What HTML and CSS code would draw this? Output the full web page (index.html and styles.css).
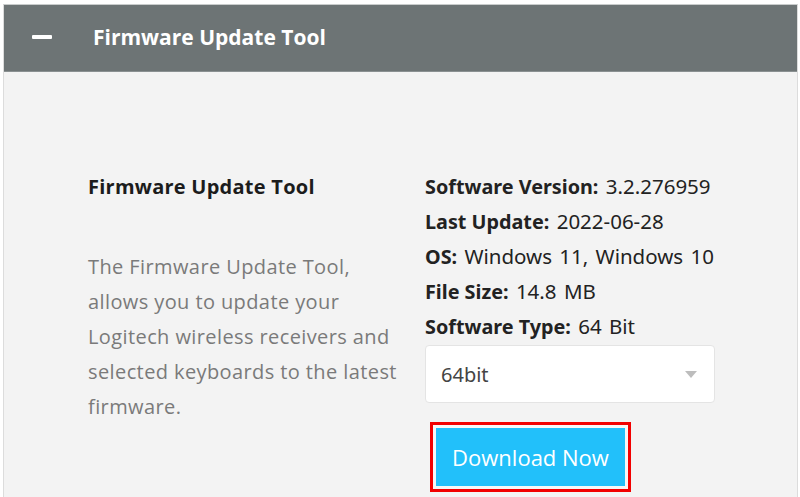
FILE: index.html
```html
<!DOCTYPE html>
<html lang="en">
  <head>
    <meta charset="UTF-8" />
    <meta name="viewport" content="width=device-width, initial-scale=1.0" />
    <title>Firmware Update Tool</title>
    <link rel="stylesheet" href="styles.css">
  </head>
  <body>
    <div class="panel">
      <div class="panel-header">
        <span class="toggle"></span>
        <h2>Firmware Update Tool</h2>
      </div>

      <div class="panel-body">
        <div class="about">
          <h3>Firmware Update Tool</h3>
          <p>
            The Firmware Update Tool, allows you to update your Logitech
            wireless receivers and selected keyboards to the latest firmware.
          </p>
        </div>

        <div class="details">
          <ul class="specs">
            <li><strong>Software Version:</strong> 3.2.276959</li>
            <li><strong>Last Update:</strong> 2022-06-28</li>
            <li><strong>OS:</strong> Windows 11, Windows 10</li>
            <li><strong>File Size:</strong> 14.8 MB</li>
            <li><strong>Software Type:</strong> 64 Bit</li>
          </ul>

          <div class="select">
            <span>64bit</span>
            <span class="caret"></span>
          </div>

          <div class="highlight">
            <a href="#" class="download">Download Now</a>
          </div>
        </div>
      </div>
    </div>
  </body>
</html>
```

FILE: styles.css
```css
* {
  margin: 0;
  padding: 0;
  box-sizing: border-box;
}

body {
  background: #ffffff;
  padding: 4px 2px 0 3px;
  font-family: "Open Sans", sans-serif;
}

.panel {
  border-top: 1px solid #c9cccc;
  border-left: 1px solid #dcdcdc;
  border-right: 1px solid #dcdcdc;
  background: #f3f3f3;
  height: 493px;
}

/* Collapsible header bar */
.panel-header {
  display: flex;
  align-items: center;
  height: 67px;
  background: #6d7475;
  border-bottom: 1px solid #8a9091;
  color: #ffffff;
}

.toggle {
  width: 20px;
  height: 4px;
  background: #ffffff;
  border-radius: 1px;
  margin-left: 28px;
  margin-bottom: 3px;
}

.panel-header h2 {
  font-size: 21px;
  font-weight: 700;
  margin-left: 41px;
  margin-bottom: 2px;
}

.panel-body {
  display: flex;
  padding: 97px 0 0 84px;
}

.about {
  width: 337px;
}

.about h3 {
  font-size: 20px;
  font-weight: 700;
  letter-spacing: 0.25px;
  color: #1c1c1c;
  line-height: 35px;
  margin-bottom: 45px;
}

.about p {
  font-size: 20px;
  font-weight: 400;
  letter-spacing: 0.4px;
  color: #7a7a7a;
  line-height: 35px;
  width: 320px;
}

.details {
  width: 290px;
}

.specs {
  list-style: none;
  font-family: "Noto Sans", "Open Sans", sans-serif;
  font-size: 20.5px;
  word-spacing: 2px;
  line-height: 35px;
  color: #222222;
  white-space: nowrap;
}

.specs strong {
  font-size: 19.8px;
  font-weight: 700;
  word-spacing: 0;
}

/* Fake dropdown */
.select {
  display: flex;
  align-items: center;
  justify-content: space-between;
  height: 58px;
  margin-top: 1px;
  padding: 0 17px 0 15px;
  background: #ffffff;
  border: 1px solid #e4e4e4;
  border-radius: 4px;
  font-family: "Noto Sans", "Open Sans", sans-serif;
  font-size: 20px;
  color: #444444;
}

.caret {
  width: 0;
  height: 0;
  border-left: 6px solid transparent;
  border-right: 6px solid transparent;
  border-top: 7px solid #bdbdbd;
}

.highlight {
  display: inline-block;
  margin: 19px 0 0 5px;
  padding: 3px;
  border: 3px solid #f20000;
  background: #f7f7f7;
}

.download {
  display: block;
  width: 189px;
  height: 58px;
  line-height: 58px;
  text-align: center;
  background: #22c0fa;
  color: #ffffff;
  font-size: 22px;
  text-decoration: none;
}
```
